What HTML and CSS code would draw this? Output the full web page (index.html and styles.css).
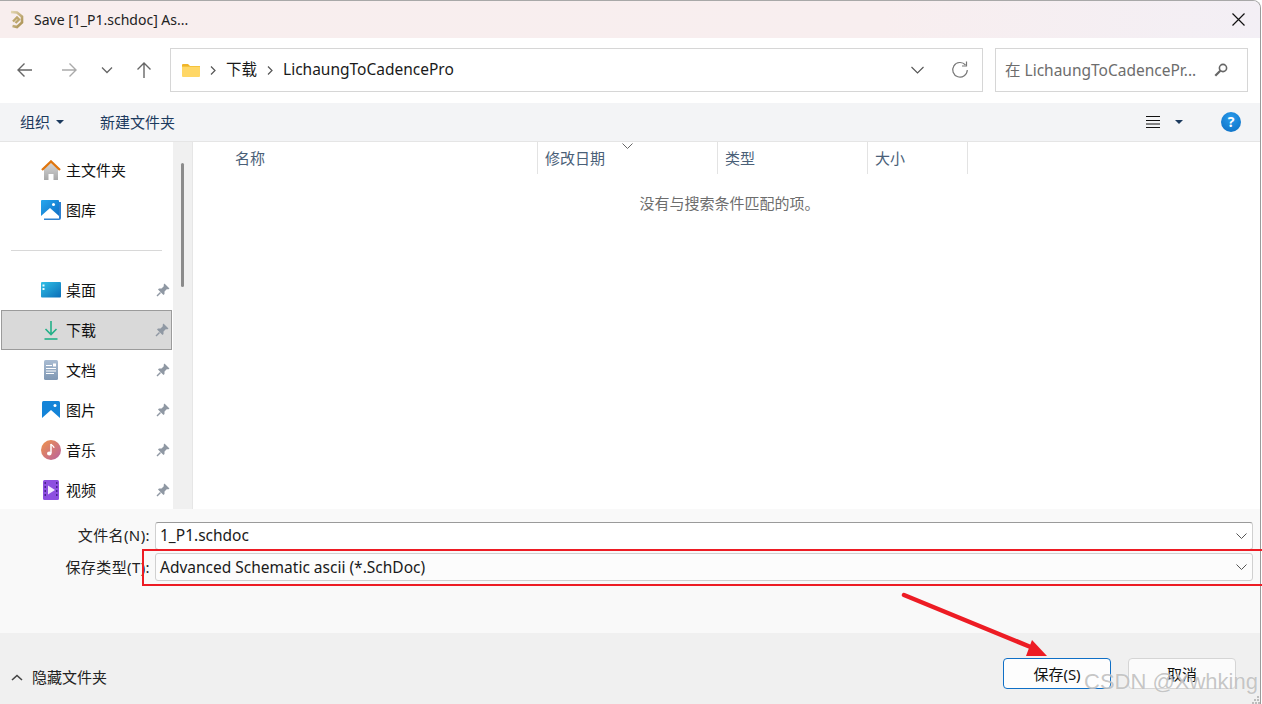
FILE: index.html
```html
<!DOCTYPE html>
<html lang="zh">
<head>
<meta charset="utf-8">
<title>Save As</title>
<link rel="stylesheet" href="styles.css">
</head>
<body>
<div class="window">
  <header class="titlebar">
    <svg class="app-icon" width="14" height="19" viewBox="0 0 14 19"><defs><linearGradient id="au" x1="0" y1="0" x2="1" y2="1"><stop offset="0" stop-color="#e2d6b2"/><stop offset="1" stop-color="#a98f4f"/></linearGradient></defs><path d="M1 2 7 2.500 12 6.500V12.500L7 17 2.500 16" fill="none" stroke="url(#au)" stroke-width="2.600"/><path d="M3 11.500 7 7.500 9 9.500 5.500 13" fill="none" stroke="#bca66c" stroke-width="2.400"/></svg>
    <span class="title-text">Save [1_P1.schdoc] As...</span>
    <svg class="close" width="13" height="13" viewBox="0 0 13 13"><path d="M.5.5 12.500 12.500M12.500.5 .5 12.500" stroke="#111" stroke-width="1.200" fill="none"/></svg>
  </header>

  <nav class="navbar">
    <div class="nav-buttons">
      <svg class="nav-btn" width="18" height="16" viewBox="0 0 18 16"><path d="M16 8H2M8.500 1.500 2 8l6.500 6.500" fill="none" stroke="#666" stroke-width="1.400"/></svg>
      <svg class="nav-btn dim" width="18" height="16" viewBox="0 0 18 16"><path d="M2 8h14M9.500 1.500 16 8l-6.500 6.500" fill="none" stroke="#aaa" stroke-width="1.400"/></svg>
      <svg class="nav-btn small" width="12" height="8" viewBox="0 0 12 8"><path d="M1 1.500 6 6.500l5-5" fill="none" stroke="#666" stroke-width="1.300"/></svg>
      <svg class="nav-btn" width="16" height="18" viewBox="0 0 16 18"><path d="M8 17V2M1.500 8.500 8 2l6.500 6.500" fill="none" stroke="#666" stroke-width="1.400"/></svg>
    </div>
    <div class="address">
      <svg class="folder" width="18" height="14" viewBox="0 0 18 14"><path d="M0 2a1 1 0 0 1 1-1h5l2 2H0Z" fill="#f0b429"/><path d="M0 3h17a1 1 0 0 1 1 1v9a1 1 0 0 1-1 1H1a1 1 0 0 1-1-1Z" fill="#ffd766"/><path d="M0 3h18v1H0Z" fill="#f5c33b"/></svg>
      <svg class="crumb-sep" width="6" height="9" viewBox="0 0 6 9"><path d="M1 .5 5 4.500 1 8.500" fill="none" stroke="#555" stroke-width="1.200"/></svg>
      <span class="crumb">下载</span>
      <svg class="crumb-sep" width="6" height="9" viewBox="0 0 6 9"><path d="M1 .5 5 4.500 1 8.500" fill="none" stroke="#555" stroke-width="1.200"/></svg>
      <span class="crumb">LichaungToCadencePro</span>
      <svg class="addr-chevron" width="13" height="8" viewBox="0 0 13 8"><path d="M.5 1 6.500 7l6-6" fill="none" stroke="#555" stroke-width="1.100"/></svg>
      <svg class="refresh" width="18" height="18" viewBox="0 0 18 18"><path d="M14.500 4A7.300 7.300 0 1 0 16.300 9" fill="none" stroke="#777" stroke-width="1.200"/><path d="M15.500 .5V5H11" fill="none" stroke="#777" stroke-width="1.200"/></svg>
    </div>
    <div class="search">
      <span class="search-text">在 LichaungToCadencePr...</span>
      <svg class="search-icon" width="14" height="14" viewBox="0 0 14 14"><circle cx="9" cy="5" r="3.600" fill="none" stroke="#666" stroke-width="1.600"/><path d="M6.300 7.700 1.300 12.700" stroke="#666" stroke-width="2.200"/></svg>
    </div>
  </nav>

  <div class="toolbar">
    <span class="tool">组织</span>
    <span class="caret caret-org"></span>
    <span class="tool new-folder">新建文件夹</span>
    <svg class="view-icon" width="14" height="12" viewBox="0 0 14 12"><path d="M0 .5h14M0 4.500h14M0 8h14M0 11.500h14" stroke="#111" stroke-width="1"/></svg>
    <span class="caret caret-view"></span>
    <span class="help">?</span>
  </div>

  <main class="main">
    <aside class="sidebar">
      <ul class="nav-group">
        <li class="nav-item">
          <svg class="nav-icon" width="20" height="20" viewBox="0 0 20 20"><defs><linearGradient id="hm" x1="0" y1="0" x2="0" y2="1"><stop offset="0" stop-color="#d5d5d5"/><stop offset="1" stop-color="#a8a8a8"/></linearGradient></defs><path d="M3 9 10 3l7 6v11h-4.500v-6h-5v6H3Z" fill="url(#hm)"/><path d="M1 10 10 1.500 19 10" fill="none" stroke="#e0760f" stroke-width="2.400"/></svg>
          <span class="nav-label">主文件夹</span>
        </li>
        <li class="nav-item">
          <svg class="nav-icon" width="20" height="20" viewBox="0 0 20 20"><defs><linearGradient id="gl" x1="0" y1="0" x2="1" y2="1"><stop offset="0" stop-color="#25a7ee"/><stop offset="1" stop-color="#0f6cc4"/></linearGradient></defs><path d="M18 2h2v16a2 2 0 0 1-2 2H3v-1.500h15Z" fill="#2f80d0"/><rect width="18" height="18" rx="1" fill="url(#gl)"/><path d="M0 16 9 8l9 8v2H0Z" fill="#fff"/><circle cx="12.500" cy="4.500" r="1.500" fill="#fff"/></svg>
          <span class="nav-label">图库</span>
        </li>
      </ul>
      <hr class="nav-divider">
      <ul class="nav-group">
        <li class="nav-item">
          <svg class="nav-icon" width="20" height="16" viewBox="0 0 20 16"><defs><linearGradient id="dk" x1="0" y1="0" x2="1" y2="1"><stop offset="0" stop-color="#2fc0e6"/><stop offset="1" stop-color="#0b6db8"/></linearGradient></defs><rect width="20" height="15.500" rx="1" fill="url(#dk)"/><path d="M1.500 2.500h2v2h-2zM1.500 6h2v2h-2z" fill="#e8fbff"/></svg>
          <span class="nav-label">桌面</span>
          <svg class="pin" width="14" height="14" viewBox="0 0 14 14"><path d="M8.500.5 13.500 5.500 12 6.500 11 6 8.500 8.500 8.500 11 7.500 12 2 6.500 3 5.500 5.500 5.500 8 3 7.500 2Z" fill="#8f98a3"/><path d="M4.500 9.500 1 13" stroke="#8f98a3" stroke-width="1.500"/></svg>
        </li>
        <li class="nav-item selected">
          <svg class="nav-icon" width="20" height="20" viewBox="0 0 20 20"><path d="M10 1v13M4.500 9 10 14.500 15.500 9" fill="none" stroke="#22b088" stroke-width="1.600"/><path d="M3.500 19h13" stroke="#22b088" stroke-width="1.600"/></svg>
          <span class="nav-label">下载</span>
          <svg class="pin" width="14" height="14" viewBox="0 0 14 14"><path d="M8.500.5 13.500 5.500 12 6.500 11 6 8.500 8.500 8.500 11 7.500 12 2 6.500 3 5.500 5.500 5.500 8 3 7.500 2Z" fill="#8f98a3"/><path d="M4.500 9.500 1 13" stroke="#8f98a3" stroke-width="1.500"/></svg>
        </li>
        <li class="nav-item">
          <svg class="nav-icon" width="20" height="20" viewBox="0 0 20 20"><defs><linearGradient id="dc" x1="0" y1="0" x2="0" y2="1"><stop offset="0" stop-color="#a9bcd2"/><stop offset="1" stop-color="#7f97b3"/></linearGradient></defs><rect x="3" width="14" height="20" rx="1.500" fill="url(#dc)"/><path d="M5 5.500h6M5 8.500h10M5 11h10M5 13.500h8" stroke="#fff" stroke-width="1"/><rect x="12" y="3.500" width="3" height="3" fill="#fff"/></svg>
          <span class="nav-label">文档</span>
          <svg class="pin" width="14" height="14" viewBox="0 0 14 14"><path d="M8.500.5 13.500 5.500 12 6.500 11 6 8.500 8.500 8.500 11 7.500 12 2 6.500 3 5.500 5.500 5.500 8 3 7.500 2Z" fill="#8f98a3"/><path d="M4.500 9.500 1 13" stroke="#8f98a3" stroke-width="1.500"/></svg>
        </li>
        <li class="nav-item">
          <svg class="nav-icon" width="20" height="18" viewBox="0 0 20 18"><rect x="1" width="18" height="18" rx="1.500" fill="#1484d8"/><path d="M1 17 10 9l9 8v1H1Z" fill="#fff"/><circle cx="14" cy="4.500" r="1.500" fill="#fff"/></svg>
          <span class="nav-label">图片</span>
          <svg class="pin" width="14" height="14" viewBox="0 0 14 14"><path d="M8.500.5 13.500 5.500 12 6.500 11 6 8.500 8.500 8.500 11 7.500 12 2 6.500 3 5.500 5.500 5.500 8 3 7.500 2Z" fill="#8f98a3"/><path d="M4.500 9.500 1 13" stroke="#8f98a3" stroke-width="1.500"/></svg>
        </li>
        <li class="nav-item">
          <svg class="nav-icon" width="20" height="20" viewBox="0 0 20 20"><defs><linearGradient id="ms" x1="0" y1="0" x2="1" y2="1"><stop offset="0" stop-color="#f0944a"/><stop offset="1" stop-color="#b8609f"/></linearGradient></defs><circle cx="10" cy="10" r="10" fill="url(#ms)"/><path d="M10 4v9" stroke="#fff" stroke-width="1.500"/><ellipse cx="8.300" cy="13.500" rx="2.300" ry="2" fill="#fff"/><path d="M10 4c1 2 3 2 3 4" fill="none" stroke="#fff" stroke-width="1.200"/></svg>
          <span class="nav-label">音乐</span>
          <svg class="pin" width="14" height="14" viewBox="0 0 14 14"><path d="M8.500.5 13.500 5.500 12 6.500 11 6 8.500 8.500 8.500 11 7.500 12 2 6.500 3 5.500 5.500 5.500 8 3 7.500 2Z" fill="#8f98a3"/><path d="M4.500 9.500 1 13" stroke="#8f98a3" stroke-width="1.500"/></svg>
        </li>
        <li class="nav-item">
          <svg class="nav-icon" width="20" height="20" viewBox="0 0 20 20"><rect x="2" width="16" height="20" rx="1.500" fill="#8d4fe0"/><path d="M3.500 2h1.500v2H3.500zM3.500 6h1.500v2H3.500zM3.500 10h1.500v2H3.500zM3.500 14h1.500v2H3.500zM15 2h1.500v2H15zM15 6h1.500v2H15zM15 10h1.500v2H15zM15 14h1.500v2H15z" fill="#4a2390"/><path d="M7 5.500 14 10 7 14.500Z" fill="#f2e9ff"/></svg>
          <span class="nav-label">视频</span>
          <svg class="pin" width="14" height="14" viewBox="0 0 14 14"><path d="M8.500.5 13.500 5.500 12 6.500 11 6 8.500 8.500 8.500 11 7.500 12 2 6.500 3 5.500 5.500 5.500 8 3 7.500 2Z" fill="#8f98a3"/><path d="M4.500 9.500 1 13" stroke="#8f98a3" stroke-width="1.500"/></svg>
        </li>
      </ul>
    </aside>
    <div class="scrollbar"><span class="thumb"></span></div>
    <section class="files">
      <div class="columns">
        <span class="col col-name"><span class="col-text">名称</span></span>
        <span class="col col-date"><span class="col-text">修改日期</span><svg class="sort" width="11" height="6" viewBox="0 0 11 6"><path d="M.5.5l5 5 5-5" fill="none" stroke="#666" stroke-width="1"/></svg></span>
        <span class="col col-type"><span class="col-text">类型</span></span>
        <span class="col col-size"><span class="col-text">大小</span></span>
      </div>
      <p class="empty">没有与搜索条件匹配的项。</p>
    </section>
  </main>

  <section class="form">
    <div class="form-row">
      <label class="form-label">文件名(N):</label>
      <div class="field field-name"><span class="field-text">1_P1.schdoc</span><svg width="11" height="6" viewBox="0 0 11 6"><path d="M.5.5l5 5 5-5" fill="none" stroke="#555" stroke-width="1"/></svg></div>
    </div>
    <div class="form-row form-row-type">
      <label class="form-label">保存类型(T):</label>
      <div class="field field-type"><span class="field-text">Advanced Schematic ascii (*.SchDoc)</span><svg width="11" height="6" viewBox="0 0 11 6"><path d="M.5.5l5 5 5-5" fill="none" stroke="#555" stroke-width="1"/></svg></div>
    </div>
  </section>

  <footer class="footer">
    <svg class="hide-chevron" width="12" height="7" viewBox="0 0 12 7"><path d="M1 6 6 1.500 11 6" fill="none" stroke="#444" stroke-width="1.600"/></svg>
    <span class="hide-label">隐藏文件夹</span>
    <button class="btn btn-primary">保存(S)</button>
    <button class="btn">取消</button>
  </footer>
</div>

<div class="red-box"></div>
<svg class="arrow" width="160" height="80" viewBox="0 0 160 80"><path d="M3 3 132 56" stroke="#ed1c24" stroke-width="4.500" stroke-linecap="round"/><path d="M146 64 125 64 131 48Z" fill="#ed1c24"/></svg>
<span class="watermark">CSDN @Xwhking</span>
<svg class="grip" width="8" height="8" viewBox="0 0 8 8"><path d="M5 0h2v2H5zM2 3h2v2H2zM5 3h2v2H5zM0 6h2v2H0zM3 6h2v2H3zM6 6h2v2H6z" fill="#bdbdbd"/></svg>
</body>
</html>
```
FILE: styles.css
```css
* { box-sizing: border-box; }
html, body { margin: 0; height: 100%; overflow: hidden; }
body {
  font-family: "Noto Sans", "Noto Sans CJK SC", sans-serif;
  font-size: 15px;
  color: #111;
  background: #fff;
  position: relative;
  width: 1262px;
  height: 704px;
}
ul { list-style: none; margin: 0; padding: 0; }
svg { flex: none; display: block; }

.window {
  display: flex;
  flex-direction: column;
  height: 704px;
  width: 1261px;
  border-right: 1px solid #9a9a9a;
  border-top: 1px solid #a8a8a8;
  border-top-right-radius: 8px;
  overflow: hidden;
}

.titlebar {
  height: 37px;
  display: flex;
  align-items: center;
  padding: 0 15px 0 10px;
  background: linear-gradient(90deg, #f8eeee 0%, #f8eeef 70%, #f3eff5 100%);
}
.app-icon { margin-right: 10px; }
.title-text { font-size: 14px; color: #222; flex: 1; padding-bottom: 1px; }

.navbar {
  height: 65px;
  display: flex;
  align-items: center;
  padding: 0 12px 1px 16px;
  background: #fff;
}
.nav-buttons { width: 154px; flex: none; display: flex; align-items: center; }
.nav-btn { margin-right: 26px; }
.nav-btn.dim { margin-right: 23px; }
.nav-btn.small { margin-right: 23px; }
.address {
  width: 813px;
  height: 44px;
  flex: none;
  border: 1px solid #d6d6d6;
  display: flex;
  align-items: center;
  padding: 0 13px 0 11px;
}
.folder { margin-right: 10px; }
.crumb-sep { margin-right: 10px; }
.crumb { margin-right: 10px; color: #1a1a1a; font-size: 15.500px; padding-bottom: 3px; }
.addr-chevron { margin-left: auto; margin-right: 27px; }
.search {
  width: 253px;
  height: 44px;
  flex: none;
  margin-left: 12px;
  border: 1px solid #d6d6d6;
  display: flex;
  align-items: center;
  padding: 0 19px 0 9px;
  justify-content: space-between;
}
.search-text { font-size: 15.500px; color: #6d6d6d; white-space: nowrap; padding-bottom: 2px; }

.toolbar {
  height: 39px;
  display: flex;
  align-items: center;
  background: #f3f4f6;
  border-bottom: 1px solid #e5e5e5;
  padding: 0 19px 0 20px;
  font-size: 15px;
}
.tool { color: #1c3a5e; padding-bottom: 2px; }
.caret {
  width: 0;
  height: 0;
  border-left: 4px solid transparent;
  border-right: 4px solid transparent;
  border-top: 4px solid #1c3a5e;
}
.caret-org { margin-left: 6px; margin-right: 36px; }
.new-folder { margin-right: auto; }
.view-icon { margin-right: 15px; }
.caret-view { margin-right: 38px; }
.help {
  width: 20px;
  height: 20px;
  border-radius: 50%;
  background: radial-gradient(circle at 50% 30%, #2a9cec, #0a6cc2);
  color: #fff;
  font-size: 14px;
  font-weight: 700;
  line-height: 20px;
  text-align: center;
}

.main { height: 367px; display: flex; background: #fff; }
.sidebar { width: 173px; flex: none; padding-top: 8px; }
.nav-item {
  height: 40px;
  display: flex;
  align-items: center;
  padding: 0 3px 0 41px;
  color: #111;
}
.nav-icon { margin-right: 5px; width: 20px; }
.nav-label { flex: 1; padding-bottom: 2px; }
.selected {
  background: #d9d9d9;
  border: 1px solid #9b9b9b;
  width: 171px;
  margin-left: 1px;
  padding: 0 2px 0 39px;
}
.nav-divider {
  height: 1px;
  border: 0;
  background: #d8d8d8;
  margin: 20px 11px 19px;
}
.scrollbar {
  width: 20px;
  flex: none;
  background: linear-gradient(90deg, #f0f0f0 0 19px, #e6e6e6 19px);
  padding-top: 21px;
}
.thumb {
  display: block;
  width: 3px;
  height: 124px;
  margin-left: 8px;
  border-radius: 2px;
  background: #8b8b8b;
}

.files { flex: 1; min-width: 0; }
.columns { display: flex; height: 32px; font-size: 15px; color: #4a6078; }
.col {
  display: flex;
  align-items: center;
  padding-left: 7px;
  border-right: 1px solid #e3e3e3;
  position: relative;
}
.col-text { padding-bottom: 2px; }
.col-name { width: 345px; padding-left: 42px; }
.col-date { width: 180px; }
.col-type { width: 150px; }
.col-size { width: 100px; }
.sort { position: absolute; left: 84px; top: 1px; }
.empty {
  margin: 18px 0 0;
  padding-left: 6px;
  text-align: center;
  font-size: 15px;
  color: #6d6d6d;
}

.form {
  height: 124px;
  background: #f9f9f9;
  padding: 13px 7px 0 0;
  display: flex;
  flex-direction: column;
  gap: 3px;
}
.form-row { display: flex; align-items: center; height: 28px; }
.form-label { width: 150px; text-align: right; font-size: 15px; letter-spacing: .4px; color: #222; margin-right: 5px; white-space: nowrap; padding-bottom: 3px; }
.field {
  width: 1098px;
  height: 28px;
  display: flex;
  align-items: center;
  justify-content: space-between;
  padding: 0 5px 0 4px;
  border: 1px solid #d0d0d0;
  border-radius: 3px;
  background: #fff;
  color: #1a1a1a;
}
.field-text { font-size: 15.500px; padding-bottom: 2px; }
.form-row-type .form-label { padding-bottom: 1px; }
.form-row-type .field-text { padding-bottom: 0; }
.field-name { border-bottom-color: #8a8a8a; border-top-color: #9a9a9a; }
.field-type { background: #fcfcfc; }

.footer {
  flex: 1;
  background: #f0f0f0;
  display: flex;
  align-items: center;
  padding: 10px 24px 0 11px;
}
.hide-chevron { margin-top: 8px; margin-right: 9px; }
.hide-label { margin-top: 5px; font-size: 15px; color: #222; margin-right: auto; }
.btn {
  width: 108px;
  height: 31px;
  margin-left: 17px;
  font: inherit;
  font-size: 15px;
  color: #111;
  background: #fbfbfb;
  border: 1px solid #d5d5d5;
  border-radius: 4px;
  padding: 0;
}
.btn-primary { border-color: #0f6fc6; background: #fdfdfd; }

.red-box {
  position: absolute;
  left: 142px;
  top: 549px;
  width: 1125px;
  height: 37px;
  border: 2px solid #ed1c24;
}
.arrow { position: absolute; left: 901px; top: 592px; }
.watermark {
  position: absolute;
  left: 1084px;
  top: 669px;
  font-family: "Liberation Sans", sans-serif;
  font-size: 22px;
  color: rgba(150, 150, 150, .55);
  text-shadow: 0 0 1px rgba(255, 255, 255, .9);
  white-space: nowrap;
}
.grip { position: absolute; left: 1252px; top: 696px; }
```
